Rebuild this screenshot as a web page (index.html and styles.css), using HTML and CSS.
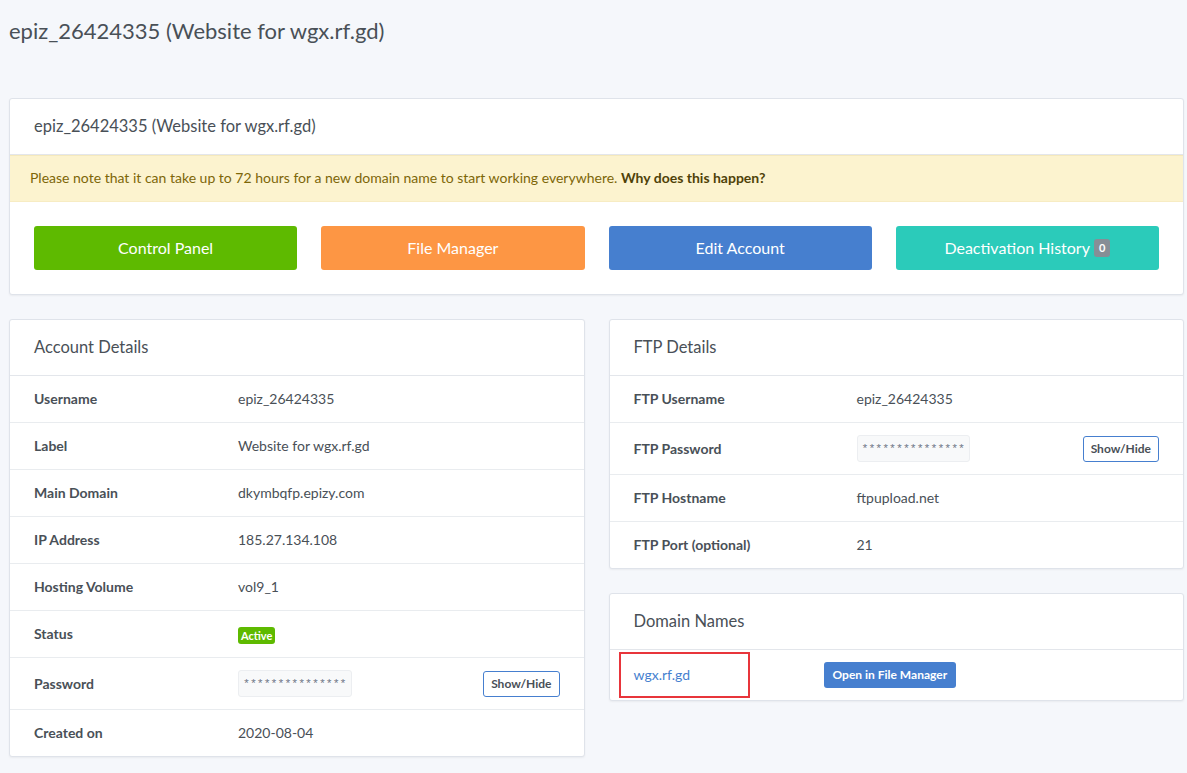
FILE: index.html
```html
<!DOCTYPE html>
<html lang="en">
<head>
<meta charset="utf-8">
<title>epiz_26424335 (Website for wgx.rf.gd)</title>
<link rel="stylesheet" href="styles.css">
</head>
<body>
<div class="page">
  <h1 class="page-title">epiz_26424335 (Website for wgx.rf.gd)</h1>

  <div class="card">
    <div class="card-header"><h3 class="card-title">epiz_26424335 (Website for wgx.rf.gd)</h3></div>
    <div class="alert">Please note that it can take up to 72 hours for a new domain name to start working everywhere. <a class="alert-link" href="#">Why does this happen?</a></div>
    <div class="actions">
      <a class="btn btn-lg btn-green" href="#">Control Panel</a>
      <a class="btn btn-lg btn-orange" href="#">File Manager</a>
      <a class="btn btn-lg btn-blue" href="#">Edit Account</a>
      <a class="btn btn-lg btn-teal" href="#">Deactivation History <span class="badge-count">0</span></a>
    </div>
  </div>

  <div class="columns">
    <div class="col">
      <div class="card">
        <div class="card-header"><h3 class="card-title">Account Details</h3></div>
        <table class="details details-account">
          <tr><th>Username</th><td>epiz_26424335</td><td class="act"></td></tr>
          <tr><th>Label</th><td>Website for wgx.rf.gd</td><td class="act"></td></tr>
          <tr><th>Main Domain</th><td>dkymbqfp.epizy.com</td><td class="act"></td></tr>
          <tr><th>IP Address</th><td>185.27.134.108</td><td class="act"></td></tr>
          <tr><th>Hosting Volume</th><td>vol9_1</td><td class="act"></td></tr>
          <tr><th>Status</th><td><span class="status-badge">Active</span></td><td class="act"></td></tr>
          <tr><th>Password</th><td><span class="secret">***************</span></td><td class="act"><button class="btn-outline">Show/Hide</button></td></tr>
          <tr><th>Created on</th><td>2020-08-04</td><td class="act"></td></tr>
        </table>
      </div>
    </div>
    <div class="col">
      <div class="card">
        <div class="card-header"><h3 class="card-title">FTP Details</h3></div>
        <table class="details details-ftp">
          <tr><th>FTP Username</th><td>epiz_26424335</td><td class="act"></td></tr>
          <tr><th>FTP Password</th><td><span class="secret">***************</span></td><td class="act"><button class="btn-outline">Show/Hide</button></td></tr>
          <tr><th>FTP Hostname</th><td>ftpupload.net</td><td class="act"></td></tr>
          <tr><th>FTP Port (optional)</th><td>21</td><td class="act"></td></tr>
        </table>
      </div>
      <div class="card">
        <div class="card-header"><h3 class="card-title">Domain Names</h3></div>
        <table class="details details-domains">
          <tr><td class="domain-cell"><a class="domain-link" href="#">wgx.rf.gd</a><span class="highlight-box"></span></td><td><a class="btn-sm-blue" href="#">Open in File Manager</a></td></tr>
        </table>
      </div>
    </div>
  </div>
</div>
</body>
</html>
```

FILE: styles.css
```css
* { box-sizing: border-box; }

html, body {
  margin: 0;
  padding: 0;
  background: #f5f7fb;
}

body {
  font-family: "Lato", "Noto Sans", sans-serif;
  font-size: 14px;
  line-height: 1.5;
  color: #495057;
}

.page {
  padding: 11px 3px 16px 9px;
}

.page-title {
  margin: 0 0 47px;
  font-size: 22px;
  font-weight: 400;
  line-height: 40px;
  color: #495057;
}

.card {
  background: #fff;
  border: 1px solid #dfe3ea;
  border-radius: 3px;
  box-shadow: 0 1px 2px rgba(0, 0, 0, 0.05);
  margin-bottom: 24px;
}

.card-header {
  display: flex;
  align-items: center;
  min-height: 56px;
  padding: 0 24px;
  border-bottom: 1px solid #e3e6eb;
}

.card-title {
  margin: 0;
  font-size: 16.5px;
  font-weight: 400;
  line-height: 1.2;
  color: #495057;
}

.alert {
  background: #fcf3cf;
  color: #7d6608;
  padding: 11px 20px 12px;
  border-top: 1px solid #f7ecc3;
  border-bottom: 1px solid #f7ecc3;
  font-size: 14px;
  line-height: 22px;
}

.card-header + .alert { border-top-color: #f5e9bd; }

.alert-link {
  color: #4f4208;
  font-weight: 700;
  text-decoration: none;
}

.actions {
  display: grid;
  grid-template-columns: repeat(4, 1fr);
  gap: 24px;
  padding: 24px;
}

.btn {
  display: flex;
  align-items: center;
  justify-content: center;
  height: 44px;
  border-radius: 3px;
  color: #fff;
  text-decoration: none;
  font-size: 16px;
}

.btn-green { background: #5eba00; }
.btn-orange { background: #fd9644; }
.btn-blue { background: #467fcf; }
.btn-teal { background: #2bcbba; }

.badge-count {
  display: inline-block;
  margin-left: 4px;
  background: #868e96;
  color: #fff;
  font-size: 11px;
  font-weight: 700;
  line-height: 18px;
  padding: 0 5px;
  border-radius: 3px;
}

.columns {
  display: grid;
  grid-template-columns: 1fr 1fr;
  gap: 24px;
  align-items: start;
}

.details {
  width: 100%;
  border-collapse: collapse;
}

.details th,
.details td {
  padding: 12px 0 12px 24px;
  text-align: left;
  vertical-align: middle;
  line-height: 22px;
  border-top: 1px solid #e9ecef;
}

.details tr:first-child th,
.details tr:first-child td { border-top: 0; }

.details th {
  font-weight: 700;
}

.details td.act {
  text-align: right;
  padding-right: 24px;
}

.details-account th { width: 204px; }
.details-ftp th { width: 223px; }
.details-domains td:first-child { width: 190px; }

.status-badge {
  display: inline-block;
  background: #5eba00;
  color: #fff;
  font-size: 11px;
  font-weight: 700;
  line-height: 17px;
  padding: 0 3px;
  border-radius: 3px;
  vertical-align: middle;
}

.secret {
  display: inline-block;
  vertical-align: middle;
  height: 27px;
  line-height: 25px;
  padding: 0 4px;
  background: #f8f9fa;
  border: 1px solid #eceef1;
  border-radius: 3px;
  font-family: "Liberation Mono", monospace;
  font-size: 11.5px;
  color: #6e7687;
}

.btn-outline {
  font-family: inherit;
  font-size: 12px;
  font-weight: 700;
  color: #495057;
  background: #fff;
  border: 1px solid #467fcf;
  border-radius: 3px;
  height: 26px;
  padding: 0 7px;
  vertical-align: middle;
}

.domain-cell {
  position: relative;
}

.domain-link {
  color: #467fcf;
  text-decoration: none;
}

.highlight-box {
  position: absolute;
  left: 9px;
  top: 2px;
  width: 131px;
  height: 46px;
  border: 2px solid #e8353b;
  pointer-events: none;
}

.btn-sm-blue {
  display: inline-block;
  background: #467fcf;
  color: #fff;
  font-size: 12px;
  font-weight: 700;
  line-height: 26px;
  padding: 0 9px;
  border-radius: 3px;
  text-decoration: none;
}
```
